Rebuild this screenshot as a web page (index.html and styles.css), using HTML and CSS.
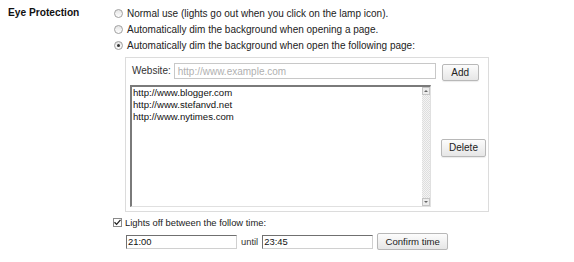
FILE: index.html
```html
<!DOCTYPE html>
<html>
<head>
<meta charset="utf-8">
<link rel="stylesheet" href="styles.css">
</head>
<body>
<div class="section">
  <div class="label">Eye Protection</div>
  <div class="options">
    <label class="opt"><span class="radio"></span>Normal use (lights go out when you click on the lamp icon).</label>
    <label class="opt"><span class="radio"></span>Automatically dim the background when opening a page.</label>
    <label class="opt"><span class="radio checked"></span>Automatically dim the background when open the following page:</label>
    <div class="panel">
      <div class="site-row">
        <span class="site-label">Website:</span>
        <span class="field site-input placeholder">http://www.example.com</span>
        <span class="btn add-btn">Add</span>
      </div>
      <div class="list-row">
        <div class="listbox">
          <div class="list-items">
            <div>http://www.blogger.com</div>
            <div>http://www.stefanvd.net</div>
            <div>http://www.nytimes.com</div>
          </div>
          <div class="scrollbar">
            <span class="sb-btn"><svg width="8" height="8" viewBox="0 0 8 8"><path d="M2 5h4L4 3z" fill="#666"/></svg></span>
            <span class="sb-track"></span>
            <span class="sb-btn"><svg width="8" height="8" viewBox="0 0 8 8"><path d="M2 3h4L4 5z" fill="#666"/></svg></span>
          </div>
        </div>
        <div class="list-side"><span class="btn delete-btn">Delete</span></div>
      </div>
    </div>
    <label class="opt check-opt"><span class="checkbox"><svg width="9" height="9" viewBox="0 0 9 9"><path d="M1.5 4.2l2.1 2.2 3.9-4.6" fill="none" stroke="#222" stroke-width="1.3"/></svg></span>Lights off between the follow time:</label>
    <div class="time-row">
      <span class="field time-input">21:00</span>
      <span class="until">until</span>
      <span class="field time-input">23:45</span>
      <span class="btn confirm-btn">Confirm time</span>
    </div>
  </div>
</div>
</body>
</html>
```

FILE: styles.css
```css
html, body {
  margin: 0;
  padding: 0;
  background: #fff;
}
body {
  font-family: "Liberation Sans", Arial, sans-serif;
  font-size: 10px;
  color: #222;
}
.section {
  display: flex;
  padding: 5px 0 0 8px;
}
.label {
  width: 106px;
  font-weight: bold;
  font-size: 10.2px;
  color: #111;
  line-height: 16px;
}
.options {
  display: flex;
  flex-direction: column;
}
.opt {
  display: flex;
  align-items: center;
  height: 16px;
  white-space: nowrap;
  font-size: 10px;
}
.radio {
  width: 9px;
  height: 9px;
  border: 1px solid #a0a0a0;
  border-radius: 50%;
  background: linear-gradient(#e4e4e4, #fff);
  margin: 0 4px 0 0;
  position: relative;
  box-sizing: border-box;
}
.radio.checked::after {
  content: "";
  position: absolute;
  left: 2px;
  top: 2px;
  width: 3px;
  height: 3px;
  border-radius: 50%;
  background: #333;
}
.panel {
  margin: 4px 0 0 11px;
  width: 364px;
  height: 155px;
  border: 1px solid #dcdcdc;
  box-sizing: border-box;
  padding: 5px 4px 4px 4px;
  display: flex;
  flex-direction: column;
}
.site-row {
  display: flex;
  align-items: flex-start;
  height: 18px;
}
.site-label {
  color: #333;
  margin: 0 3px 0 2px;
  line-height: 16px;
}
.field {
  height: 16px;
  box-sizing: border-box;
  border: 1px solid #bbb;
  display: flex;
  align-items: center;
  padding-left: 1px;
  color: #111;
  background: #fff;
}
.site-input {
  width: 262px;
  border-color: #c8c8c8;
  padding-left: 3px;
}
.placeholder {
  color: #b0b0b0;
}
.btn {
  display: inline-flex;
  align-items: center;
  justify-content: center;
  box-sizing: border-box;
  border: 1px solid #b8b8b8;
  border-radius: 2px;
  background: linear-gradient(#fcfcfc, #e6e6e6);
  box-shadow: 0 1px 1px rgba(0,0,0,0.08);
  color: #222;
  font-size: 10px;
  white-space: nowrap;
}
.add-btn {
  margin: 1px 0 0 6px;
  width: 37px;
  height: 17px;
}
.list-row {
  display: flex;
  margin-top: 4px;
}
.listbox {
  flex-shrink: 0;
  width: 301px;
  height: 122px;
  box-sizing: border-box;
  border-style: solid;
  border-color: #7a7a7a #e0e0e0 #e0e0e0 #7a7a7a;
  border-width: 2px 1px 1px 2px;
  display: flex;
}
.list-items {
  flex: 1;
  padding: 0 0 0 1px;
  line-height: 12px;
  font-size: 9.6px;
  color: #111;
}
.scrollbar {
  width: 8px;
  display: flex;
  flex-direction: column;
  background-color: #eee;
  background-image: repeating-conic-gradient(#dedede 0 25%, #f4f4f4 0 50%);
  background-size: 2px 2px;
}
.sb-btn {
  width: 8px;
  height: 8px;
  background: #ececec;
  border: 1px solid #c4c4c4;
  box-sizing: border-box;
  display: flex;
}
.sb-btn svg {
  margin: -1px;
}
.sb-track {
  flex: 1;
}
.list-side {
  display: flex;
  align-items: center;
  padding-left: 10px;
}
.delete-btn {
  width: 45px;
  height: 18px;
  margin-top: 3px;
}
.check-opt {
  margin-top: 2px;
  font-size: 9.4px;
}
.checkbox {
  width: 9px;
  height: 9px;
  border: 1px solid #8a8a8a;
  box-sizing: border-box;
  background: #fff;
  margin: 0 3px 0 -1px;
  display: flex;
}
.checkbox svg {
  margin: -1px;
}
.time-row {
  display: flex;
  align-items: center;
  margin: 3px 0 0 12px;
}
.time-input {
  width: 111px;
  height: 14px;
  font-size: 9.4px;
  border-style: solid;
  border-color: #707070 #d0d0d0 #d0d0d0 #707070;
}
.until {
  margin: 0 4px;
  color: #333;
  font-size: 9.4px;
}
.confirm-btn {
  margin-left: 4px;
  width: 71px;
  height: 17px;
  font-size: 9.6px;
}
```
